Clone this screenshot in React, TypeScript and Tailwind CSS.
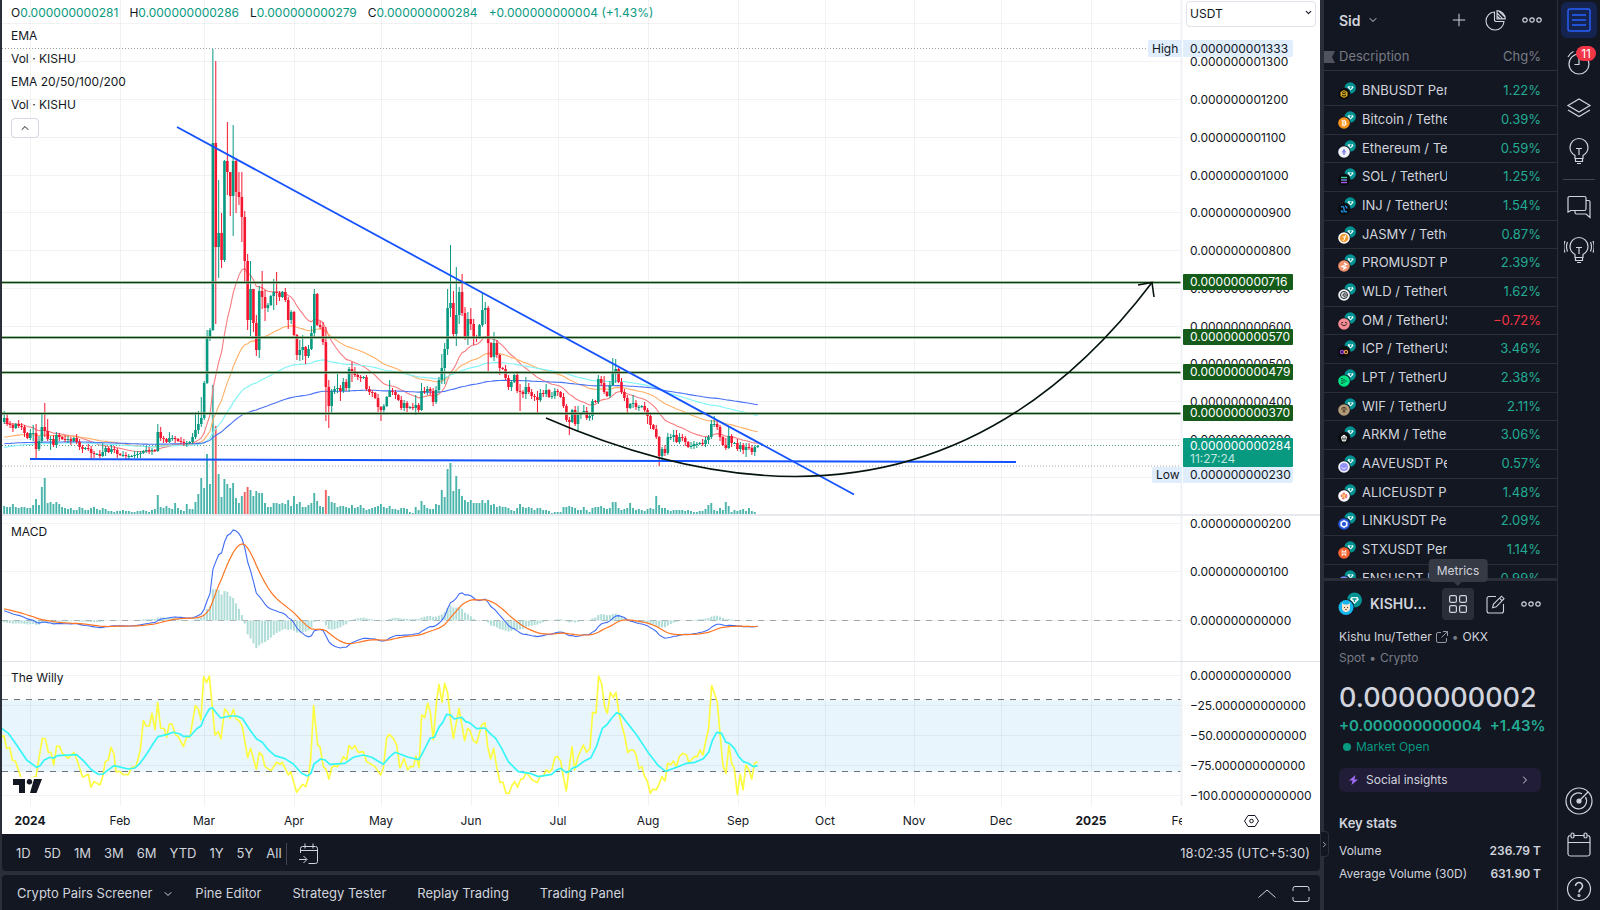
import { ReactNode } from "react";
import { ChevronDown, ChevronRight, ChevronUp, Plus } from "lucide-react";
import { FaBtc, FaEthereum } from "react-icons/fa";

/* ---------- chart data ---------- */

// Every daily series starts nine days before 1 January.
const FIRST_DAY = -9;
const dayX = (day: number) => 30.3 + day * 2.898;

// Daily closes, as heights on the price pane.
const closes = [
  418, 424, 425, 428, 424, 426, 427, 433, 438, 433, 433, 449, 441, 427, 431,
  439, 439, 445, 435, 437, 439, 440, 439, 441, 438, 442, 447, 449, 448, 449,
  453, 454, 454, 456, 452, 448, 452, 449, 450, 454, 455, 455, 456, 456, 456,
  455, 454, 453, 451, 450, 451, 450, 451, 432, 438, 439, 442, 438, 438, 439,
  441, 442, 443, 443, 442, 437, 430, 424, 418, 383, 337, 330, 143, 247, 233,
  260, 161, 172, 196, 161, 192, 197, 217, 261, 320, 289, 323, 350, 291, 297,
  308, 305, 296, 292, 293, 297, 292, 300, 320, 312, 335, 355, 350, 347, 356,
  349, 333, 294, 325, 327, 342, 387, 406, 391, 389, 388, 391, 382, 388, 369,
  371, 375, 377, 378, 377, 389, 392, 393, 398, 407, 410, 406, 397, 391, 392,
  395, 400, 408, 403, 408, 407, 408, 405, 410, 391, 392, 389, 391, 402, 390,
  380, 368, 349, 308, 303, 334, 315, 292, 313, 337, 319, 324, 337, 338, 325,
  310, 308, 343, 357, 343, 355, 368, 369, 378, 387, 382, 375, 391, 392, 394,
  387, 392, 396, 397, 400, 393, 394, 390, 397, 396, 391, 392, 397, 406, 420,
  422, 410, 424, 415, 414, 411, 418, 416, 401, 402, 379, 383, 392, 396, 385,
  372, 369, 382, 392, 398, 408, 404, 403, 407, 407, 406, 410, 416, 425, 429,
  437, 456, 449, 453, 437, 437, 435, 442, 437, 438, 442, 447, 446, 444, 444,
  443, 444, 440, 437, 424, 424, 427, 437, 445, 448, 436, 443, 443, 449, 445,
  450, 447, 448, 452, 447, 446,
];

// Highs and lows of the days whose wicks stand out.
const wicks: Record<number, [number, number]> = {
  [-9]: [411, 424], 1: [425, 441], 2: [424, 458], 3: [436, 451], 4: [413, 443],
  5: [403, 437], 6: [419, 441], 7: [436, 450], 21: [446, 459], 25: [443, 457],
  44: [424, 452], 45: [427, 441], 48: [432, 443], 57: [412, 439],
  58: [411, 434], 59: [397, 427], 60: [381, 420], 61: [330, 384],
  63: [49, 331], 64: [61, 324], 65: [180, 278], 66: [213, 268], 67: [160, 262],
  68: [122, 195], 69: [172, 216], 70: [125, 236], 71: [158, 213],
  72: [172, 205], 73: [172, 242], 74: [211, 283], 75: [254, 330],
  76: [261, 336], 77: [289, 332], 78: [315, 356], 79: [286, 358],
  80: [271, 309], 81: [290, 321], 84: [279, 310], 85: [272, 305],
  89: [297, 329], 92: [334, 360], 93: [340, 361], 94: [335, 360],
  95: [346, 364], 97: [326, 350], 98: [289, 337], 101: [322, 345],
  102: [327, 421], 103: [380, 428], 104: [389, 413], 106: [374, 393],
  107: [385, 401], 111: [362, 382], 116: [375, 391], 120: [394, 412],
  121: [406, 421], 124: [380, 397], 133: [395, 415], 135: [383, 411],
  139: [388, 406], 142: [354, 384], 143: [343, 384], 144: [289, 355],
  145: [245, 317], 146: [291, 337], 147: [267, 346], 148: [287, 324],
  149: [274, 316], 150: [307, 340], 151: [312, 345], 152: [308, 330],
  153: [319, 345], 156: [293, 327], 157: [302, 324], 158: [306, 371],
  160: [332, 361], 162: [354, 375], 169: [384, 411], 171: [377, 399],
  175: [391, 413], 178: [384, 397], 185: [404, 422], 186: [417, 435],
  189: [406, 431], 191: [405, 414], 198: [376, 394], 201: [358, 386],
  202: [359, 383], 206: [395, 414], 208: [395, 408], 213: [408, 424],
  217: [436, 466], 219: [445, 456], 222: [430, 442], 223: [430, 443],
  235: [420, 439], 236: [416, 427], 240: [438, 450], 241: [426, 449],
  247: [443, 457], 249: [445, 455],
};

const volumes = [
  8, 7, 7, 10, 7, 6, 7, 7, 6, 6, 9, 15, 9, 27, 36, 11, 12, 10, 12, 10, 7, 6, 5,
  6, 4, 4, 7, 6, 4, 4, 6, 7, 5, 4, 6, 5, 3, 3, 2, 3, 3, 4, 3, 3, 2, 2, 3, 3, 4,
  3, 2, 4, 5, 19, 7, 6, 8, 6, 5, 11, 6, 4, 3, 10, 5, 5, 12, 20, 36, 26, 60, 30,
  129, 88, 40, 17, 35, 30, 26, 31, 16, 11, 18, 22, 27, 24, 18, 23, 21, 21, 11,
  7, 7, 11, 11, 10, 11, 10, 14, 8, 18, 10, 12, 7, 7, 9, 11, 21, 13, 8, 7, 24,
  18, 12, 11, 7, 8, 8, 7, 6, 9, 6, 7, 9, 6, 4, 5, 6, 7, 8, 10, 7, 6, 8, 5, 5,
  4, 6, 6, 5, 2, 1, 7, 4, 13, 9, 6, 5, 5, 10, 9, 24, 17, 45, 51, 23, 38, 25,
  18, 14, 12, 14, 11, 11, 11, 14, 11, 14, 9, 10, 7, 8, 7, 7, 6, 4, 3, 6, 10, 7,
  6, 7, 6, 4, 6, 6, 4, 4, 3, 1, 2, 2, 2, 7, 7, 8, 7, 6, 4, 4, 7, 4, 2, 6, 7, 7,
  8, 6, 5, 6, 12, 12, 6, 4, 5, 6, 11, 6, 4, 5, 4, 3, 5, 6, 5, 18, 9, 6, 6,
  4, 3, 4, 4, 4, 4, 3, 4, 3, 2, 2, 3, 3, 5, 9, 11, 4, 3, 6, 4, 12, 8, 2, 4,
  3, 4, 5, 3, 6, 3, 2,
];
const redVolume = [64, 74, 75, 102];

// Oscillator traces, sampled three units to the pixel, January-April then May on.
const willyA =
  "5,710 12,707 20,745 29,742 37,780 46,783 62,830 76,850 92,835 108,830 127,715 136,717 145,757 153,757 161,795 170,738 179,740 187,760 205,775 222,757 231,780 248,832 265,823 273,862 282,845 300,855 308,830 316,785 325,780 333,742 342,762 348,815 360,815 368,823 385,824 395,803 408,800 421,750 430,662 439,678 448,678 456,640 465,690 473,607 482,684 493,686 500,712 508,672 516,672 526,703 535,710 550,740 560,713 570,710 586,617 595,628 603,660 611,530 620,548 628,528 645,705 655,695 663,717 674,627 682,635 691,655 700,628 708,656 718,663 727,680 743,773 752,745 769,808 778,757 787,767 795,800 813,812 830,787 840,793 847,787 865,825 872,815 890,877 908,853 917,860 925,835 932,780 941,617 953,735 960,740 970,800 978,808 987,837 995,803 1003,797 1012,800 1021,790 1030,770 1040,780 1047,737 1056,747 1065,737 1075,757 1090,755 1100,785 1125,800 1142,825 1150,805 1160,715 1168,703 1180,715 1190,735 1200,805";
const willyB =
  "0,805 12,775 23,810 30,800 40,800 48,768 57,803 65,645 74,653 83,610 91,637 100,720 109,610 117,553 126,607 134,550 143,580 152,660 160,715 177,625 194,722 203,685 210,692 220,722 230,730 245,675 255,668 263,740 272,777 281,745 290,800 300,847 309,847 318,880 327,880 335,858 344,845 353,862 362,838 370,836 379,817 397,840 412,848 421,828 430,828 439,810 447,817 456,808 465,772 473,770 482,783 490,830 499,873 508,800 516,740 524,810 534,770 550,735 560,757 570,745 578,637 588,640 596,528 605,552 614,620 622,640 631,577 640,592 648,577 657,640 665,675 674,707 683,757 692,750 700,750 708,763 717,806 726,800 733,827 742,843 751,880 759,867 769,870 777,853 786,830 795,843 803,790 812,795 820,783 829,800 838,770 848,760 860,765 866,787 884,770 892,770 900,750 909,765 918,720 926,685 935,557 943,580 952,607 961,710 969,797 978,820 987,735 995,790 1003,805 1012,883 1021,823 1029,870 1038,795 1047,810 1055,837 1064,790 1073,785";
const willyEmaA =
  "5,685 25,700 50,735 80,780 110,802 120,797 133,780 150,772 160,775 172,767 230,764 250,782 275,810 295,823 310,822 325,810 342,797 385,807 405,804 420,790 440,762 457,735 474,710 500,704 520,697 540,702 550,709 570,709 592,685 603,678 612,655 628,627 637,623 650,640 662,654 690,648 710,648 727,655 750,690 770,717 787,727 805,750 825,767 855,776 880,792 905,820 922,828 933,820 942,792 962,777 975,780 990,793 1035,790 1060,772 1090,765 1115,772 1150,793 1170,770 1185,757 1200,762";
const willyEmaB =
  "0,762 25,772 57,779 75,745 90,715 103,712 118,680 128,668 140,643 152,645 163,657 185,652 197,665 208,668 230,686 255,684 270,700 287,715 305,745 325,785 355,815 390,820 415,830 455,823 470,810 482,805 499,818 510,813 517,805 530,800 555,782 573,773 590,738 607,685 620,675 635,655 650,638 662,643 675,660 710,705 745,758 775,797 797,814 830,802 860,790 885,787 910,776 926,757 937,722 950,697 965,700 978,727 988,730 1003,745 1015,768 1030,785 1045,790 1060,800 1073,797";

const months: [string, number][] = [
  ["2024", 30],
  ["Feb", 120],
  ["Mar", 204],
  ["Apr", 294],
  ["May", 381],
  ["Jun", 471],
  ["Jul", 558],
  ["Aug", 648],
  ["Sep", 738],
  ["Oct", 825],
  ["Nov", 914],
  ["Dec", 1001],
  ["2025", 1091],
  ["Feb", 1182],
];

const priceTicks: [string, number][] = [
  ["0.000000001300", 61],
  ["0.000000001200", 99],
  ["0.000000001100", 137],
  ["0.000000001000", 175],
  ["0.000000000900", 212],
  ["0.000000000800", 250],
  ["0.000000000700", 288],
  ["0.000000000600", 326],
  ["0.000000000500", 363],
  ["0.000000000400", 401],
  ["0.000000000300", 439],
  ["0.000000000200", 523],
  ["0.000000000100", 571],
  ["0.000000000000", 620],
  ["0.000000000000", 675],
  ["−25.000000000000", 705],
  ["−50.000000000000", 735],
  ["−75.000000000000", 765],
  ["−100.000000000000", 795],
];

const levels: [string, number][] = [
  ["0.000000000716", 282],
  ["0.000000000570", 337],
  ["0.000000000479", 372],
  ["0.000000000370", 413],
];

function ema(values: number[], length: number, seed: number) {
  const k = 2 / (length + 1);
  let last = seed;
  return values.map((v) => (last = last + k * (v - last)));
}

function line(values: number[]) {
  return values
    .map((v, n) => `${dayX(n + FIRST_DAY).toFixed(1)},${v.toFixed(1)}`)
    .join(" ");
}

const MACD_ZERO = 620.5;
const fast = ema(closes, 12, 421);
const slow = ema(closes, 26, 429);
const macd = fast.map((v, n) => (v - slow[n]) * 1.283);
const signal = ema(macd, 9, -12);

const averages = [
  { stroke: "#f77c80", values: ema(closes, 20, 424) },
  { stroke: "#ffb068", values: ema(closes, 50, 438) },
  { stroke: "#7ff4f7", values: ema(closes, 100, 448) },
  { stroke: "#4a72f5", values: ema(closes, 200, 444) },
];

/* ---------- chart ---------- */

function Plot() {
  return (
    <svg className="h-full min-w-0 flex-1" role="img" aria-label="KISHU / USDT daily chart">
      <rect x="0" y="700" width="100%" height="72" fill="#e9f5fc" />
      {months.map(([, x]) => (
        <line key={x} x1={x - 1.5} x2={x - 1.5} y1="0" y2="806" stroke="#000" strokeOpacity="0.05" />
      ))}
      {[23, 477, ...priceTicks.map(([, y]) => y)].map((y) => (
        <line key={y} x1="0" x2="100%" y1={y + 0.5} y2={y + 0.5} stroke="#000" strokeOpacity="0.05" />
      ))}
      <line x1="0" x2="100%" y1="48.5" y2="48.5" stroke="#9b9ea6" strokeDasharray="1 2" />
      <line x1="0" x2="100%" y1="466" y2="466" stroke="#a6a8ae" strokeDasharray="1 2" />
      <line x1="0" x2="100%" y1="445.5" y2="445.5" stroke="#4f9c8f" strokeDasharray="1 2" />
      <line x1="0" x2="100%" y1="699.5" y2="699.5" stroke="#70737c" strokeDasharray="6 6" />
      <line x1="0" x2="100%" y1="771.5" y2="771.5" stroke="#70737c" strokeDasharray="6 6" />
      <line x1="0" x2="100%" y1="620.5" y2="620.5" stroke="#a3a5ab" strokeDasharray="6 6" />

      <g transform="translate(-2 0)">
        {volumes.map((v, n) => (
          <rect
            key={n}
            x={dayX(n + FIRST_DAY) - 1}
            y={514 - v}
            width="1.9"
            height={v}
            fill={redVolume.includes(n + FIRST_DAY) ? "#f0625f" : "#4bb5ac"}
          />
        ))}
        {averages.map((a) => (
          <polyline key={a.stroke} points={line(a.values)} fill="none" stroke={a.stroke} strokeWidth="1.1" />
        ))}
        {closes.map((close, n) => {
          const open = n === 0 ? 422 : closes[n - 1];
          const day = n + FIRST_DAY;
          const x = dayX(day);
          const top = Math.min(open, close);
          const bottom = Math.max(open, close);
          const [high, low] = wicks[day] ?? [top - 1 - ((n * 7) % 4), bottom + 1 + ((n * 5) % 4)];
          const color = close > open ? "#f5162f" : "#089981";
          return (
            <g key={day} fill={color}>
              <rect x={x - 0.5} y={high} width="1" height={low - high} />
              <rect x={x - 1.3} y={top} width="2.6" height={Math.max(bottom - top, 1)} />
            </g>
          );
        })}
      </g>

      {levels.map(([label, y]) => (
        <g key={label}>
          <line x1="0" x2="100%" y1={y + 0.5} y2={y + 0.5} stroke="#7ea87f" strokeWidth="2.4" />
          <line x1="0" x2="100%" y1={y + 0.5} y2={y + 0.5} stroke="#0d3d12" strokeWidth="1" />
        </g>
      ))}

      <g transform="translate(-2 0)" fill="none">
        <path d="M30 459L1016 462" stroke="#1553ff" strokeWidth="2" />
        <path d="M177 127L854 494.500" stroke="#1553ff" strokeWidth="1.8" />
        <path d="M546 418Q924 583 1152 282.500" stroke="#05140c" strokeWidth="1.6" />
        <path d="M1138 285L1152 282.500L1154 297" stroke="#05140c" strokeWidth="1.6" />

        {macd.map((m, n) => {
          const h = m - signal[n];
          return (
            <rect
              key={n}
              x={dayX(n + FIRST_DAY) - 1}
              y={h < 0 ? MACD_ZERO + h : MACD_ZERO}
              width="2"
              height={Math.abs(h)}
              fill="#b0ddd8"
            />
          );
        })}
        <polyline points={line(macd.map((v) => v + MACD_ZERO))} stroke="#3f6cf6" strokeWidth="1.1" />
        <polyline points={line(signal.map((v) => v + MACD_ZERO))} stroke="#ff7420" strokeWidth="1.2" />

        <g strokeLinejoin="round" strokeWidth="5">
          <g transform="translate(0 500) scale(0.3333)">
            <polyline points={willyA} stroke="#fdfd40" />
            <polyline points={willyEmaA} stroke="#33f6f9" />
          </g>
          <g transform="translate(400 500) scale(0.3333)">
            <polyline points={willyB} stroke="#fdfd40" />
            <polyline points={willyEmaB} stroke="#33f6f9" />
          </g>
        </g>
      </g>

      <g fill="#131722" fontSize="12" textAnchor="middle">
        {months.map(([label, x]) => (
          <text key={x} x={x - 2} y="825" fontWeight={label.startsWith("20") ? 700 : 400}>
            {label}
          </text>
        ))}
      </g>
    </svg>
  );
}

function PriceAxis() {
  return (
    <svg className="h-full w-[138px] shrink-0 overflow-visible" fontSize="12" fill="#131722">
      <line x1="-0.5" x2="-0.5" y1="0" y2="806" stroke="#f0f1f4" strokeWidth="2" />
      {priceTicks.map(([label, y]) => (
        <text key={y} x="8" y={y + 5}>
          {label}
        </text>
      ))}
      <path d="M-32 40H109a2 2 0 0 1 2 2V55a2 2 0 0 1 -2 2H-32a2 2 0 0 1 -2 -2V42a2 2 0 0 1 2 -2z" fill="#e0edfd" />
      <path d="M-28 467H109a2 2 0 0 1 2 2V481a2 2 0 0 1 -2 2H-28a2 2 0 0 1 -2 -2V469a2 2 0 0 1 2 -2z" fill="#e0edfd" />
      <path d="M0.500 40V57M0.500 467V483" stroke="#fff" />
      <text x="-30" y="53">High</text>
      <text x="8" y="53">0.000000001333</text>
      <text x="-26" y="479">Low</text>
      <text x="8" y="479">0.000000000230</text>
      {levels.map(([label, y]) => (
        <g key={label}>
          <rect x="1" y={y - 8} width="110" height="16" rx="1" fill="#155c1b" />
          <text x="8" y={y + 4} fill="#fff">
            {label}
          </text>
        </g>
      ))}
      <rect x="1" y="438" width="110" height="29" rx="1" fill="#089981" />
      <text x="8" y="450" fill="#fff">0.000000000284</text>
      <text x="8" y="463" fill="#bfe6df">11:27:24</text>
      <g fill="none" stroke="#131722">
        <path d="M66 815.500H73L76.500 821L73 826.500H66L62.500 821z" />
        <circle cx="69.500" cy="821" r="1.800" />
      </g>
    </svg>
  );
}

function Legend() {
  const ohlc = [
    ["O", "0.000000000281"],
    ["H", "0.000000000286"],
    ["L", "0.000000000279"],
    ["C", "0.000000000284"],
  ];
  return (
    <div className="absolute top-[3px] left-[9px] flex flex-col items-start gap-1 text-[12px] leading-[19px]">
      <div className="flex gap-[11px] whitespace-nowrap">
        {ohlc.map(([name, value]) => (
          <span key={name}>
            {name}
            <span className="text-[#089981]">{value}</span>
          </span>
        ))}
        <span className="text-[#089981]">+0.000000000004 (+1.43%)</span>
      </div>
      {["EMA", "Vol · KISHU", "EMA 20/50/100/200", "Vol · KISHU"].map((name, n) => (
        <div key={n}>{name}</div>
      ))}
      <button
        aria-label="Collapse legend"
        className="flex h-5 w-7 items-center justify-center rounded-sm border border-[#d6d9e2] bg-white"
      >
        <ChevronUp size={12} />
      </button>
    </div>
  );
}

function Chart() {
  return (
    <div className="relative flex min-h-0 flex-1 overflow-hidden bg-white text-[#131722]">
      <Plot />
      <PriceAxis />
      <div className="absolute inset-x-0 top-[514px] h-[2px] bg-[#e8eaf0]" />
      <div className="absolute inset-x-0 top-[661px] h-px bg-[#e0e3eb]" />
      <Legend />
      <span className="absolute top-[522px] left-[9px] text-[12px] leading-[19px]">MACD</span>
      <span className="absolute top-[668px] left-[9px] text-[12px] leading-[19px]">The Willy</span>
      <svg className="absolute top-[777px] left-2 h-[18px] w-[34px]" viewBox="0 0 34 18" fill="#131722">
        <path
          d="M3 2H15V16H9V8H3zM24 2H32L26.500 16H20zM19.500 2A2.800 2.800 0 1 1 19.400 2z"
          stroke="#fff"
          strokeWidth="4"
          paintOrder="stroke"
        />
      </svg>
      <div className="absolute top-0 right-[4px] w-[130px]">
        <select
          aria-label="Currency"
          className="h-[26px] w-full appearance-none rounded border border-[#e0e3eb] bg-white px-[3px] text-[12px]"
        >
          <option>USDT</option>
        </select>
        <ChevronDown size={9} strokeWidth={3} className="pointer-events-none absolute top-2 right-[3px]" />
      </div>
    </div>
  );
}

/* ---------- bars under the chart ---------- */

function RangeBar() {
  return (
    <div className="flex h-[37px] shrink-0 items-center rounded-b bg-[#131722] pt-[2px] pr-[10px] pl-[14px] text-[13px]">
      <div className="flex gap-[13px]">
        {["1D", "5D", "1M", "3M", "6M", "YTD", "1Y", "5Y", "All"].map((range) => (
          <button key={range}>{range}</button>
        ))}
      </div>
      <span className="mr-3 ml-1 h-[22px] w-px bg-[#434651]" />
      <button aria-label="Go to date">
        <svg width="20" height="22" viewBox="0 0 20 22" fill="none" stroke="currentColor">
          <path d="M1.500 10V5.500a2 2 0 0 1 2 -2H16.500a2 2 0 0 1 2 2V18.500a2 2 0 0 1 -2 2H9.500M1.500 7.500H18.500M6 0.500V5.500M14 0.500V5.500M0 16.500H7.500M4.500 13L8 16.500L4.500 20" />
        </svg>
      </button>
      <button className="ml-auto">18:02:35 (UTC+5:30)</button>
    </div>
  );
}

function PanelBar() {
  return (
    <div className="flex h-[35px] shrink-0 items-center gap-[31px] rounded-t bg-[#131722] pt-[2px] pr-[10px] pl-[15px] text-[13px]">
      <button className="-mr-[10px] flex items-center gap-[10px]">
        Crypto Pairs Screener
        <ChevronDown size={12} />
      </button>
      <button>Pine Editor</button>
      <button>Strategy Tester</button>
      <button>Replay Trading</button>
      <button>Trading Panel</button>
      <div className="ml-auto flex items-center gap-4">
        <button aria-label="Open panel">
          <svg width="18" height="18" viewBox="0 0 18 18" fill="none" stroke="currentColor">
            <path d="M0.500 12.500L9 5L17.500 12.500" />
          </svg>
        </button>
        <button aria-label="Maximize panel">
          <svg width="18" height="18" viewBox="0 0 18 18" fill="none" stroke="currentColor">
            <path d="M1 6V3.500a2 2 0 0 1 2 -2H15a2 2 0 0 1 2 2V6M1 12V14.500a2 2 0 0 0 2 2H15a2 2 0 0 0 2 -2V12" />
          </svg>
        </button>
      </div>
    </div>
  );
}

/* ---------- watchlist ---------- */

type Coin = { name: string; change: string; bg: string; mark: ReactNode };

const coins: Coin[] = [
  {
    name: "BNBUSDT Perpetual",
    change: "1.22%",
    bg: "#0b0c0e",
    mark: (
      <>
        <path d="M6 8L9.500 10V14L6 16L2.500 14V10z" fill="#d9a81c" />
        <path d="M4 10.500L6 11.700L8 10.500M4 13L6 14.200L8 13M6 9V10" stroke="#0b0c0e" fill="none" />
      </>
    ),
  },
  { name: "Bitcoin / TetherUS", change: "0.39%", bg: "#f7931a", mark: <FaBtc x="2.500" y="8.500" size={7} color="#fff" /> },
  { name: "Ethereum / TetherUS", change: "0.59%", bg: "#f2f3fa", mark: <FaEthereum x="2.500" y="8.500" size={7} color="#7d84dc" /> },
  {
    name: "SOL / TetherUS",
    change: "1.25%",
    bg: "#0b0c0e",
    mark: (
      <g strokeWidth="1.4">
        <path d="M3 9.500H9" stroke="#39d6a8" />
        <path d="M3 12H9" stroke="#6d8fe0" />
        <path d="M3 14.500H9" stroke="#a45bf0" />
      </g>
    ),
  },
  {
    name: "INJ / TetherUS",
    change: "1.54%",
    bg: "#0b0c0e",
    mark: <path d="M3 10Q6 8.500 6 12T9 14.500M3 13.500Q4 15 5.500 15M7 9Q9 9.500 9 11.500" stroke="#1d8ce0" strokeWidth="1.500" fill="none" />,
  },
  {
    name: "JASMY / TetherUS",
    change: "0.87%",
    bg: "#fff",
    mark: (
      <>
        <circle cx="6" cy="12" r="4.300" fill="#f29a2e" />
        <path d="M7.500 9L6 14.500L4.500 14M4.500 11H8" stroke="#fff" fill="none" />
      </>
    ),
  },
  { name: "PROMUSDT Perpetual", change: "2.39%", bg: "#f0926e", mark: <path d="M6 9L8.500 10.500L4 12.500L8 13.500L5 15.500" stroke="#fff" strokeWidth="1.300" fill="none" /> },
  {
    name: "WLD / TetherUS",
    change: "1.62%",
    bg: "#eceef1",
    mark: (
      <g stroke="#22252d" fill="none">
        <circle cx="6" cy="12" r="3.500" />
        <path d="M9 12H5.500M7.500 10.500A1.700 1.700 0 1 0 7.500 13.500" />
      </g>
    ),
  },
  {
    name: "OM / TetherUS",
    change: "−0.72%",
    bg: "#f58b93",
    mark: <path d="M3 11.500Q6 16 9 11.500M3.500 10.500H5M7 10.500H8.500" stroke="#30222b" fill="none" />,
  },
  {
    name: "ICP / TetherUS",
    change: "3.46%",
    bg: "#0b0c0e",
    mark: (
      <g fill="none" strokeWidth="1.200">
        <circle cx="4" cy="12" r="1.600" stroke="#a04ae0" />
        <circle cx="8" cy="12" r="1.600" stroke="#ef9a3a" />
      </g>
    ),
  },
  {
    name: "LPT / TetherUS",
    change: "2.38%",
    bg: "#00e287",
    mark: <path d="M4 9V15M6 10.300V13.700M8 11.500V12.500" stroke="#0c3124" strokeWidth="1.300" strokeDasharray="1.300 1" fill="none" />,
  },
  {
    name: "WIF / TetherUS",
    change: "2.11%",
    bg: "#b39a78",
    mark: <path d="M3 11H9M4.500 9.500H7.500M6 12V15M4.500 13H7.500" stroke="#4e3a2a" fill="none" />,
  },
  {
    name: "ARKM / TetherUS",
    change: "3.06%",
    bg: "#0b0c0e",
    mark: <path d="M6 9L8.500 11L7.500 15H4.500L3.500 11zM6 9V15M3.500 11H8.500" stroke="#fff" fill="none" />,
  },
  {
    name: "AAVEUSDT Perpetual",
    change: "0.57%",
    bg: "#f3f2fb",
    mark: (
      <>
        <circle cx="6" cy="12" r="4" fill="#9391f7" />
        <path d="M3.500 12.500Q6 15.500 8.500 12.500" stroke="#fff" fill="none" strokeWidth="0.800" />
      </>
    ),
  },
  {
    name: "ALICEUSDT Perpetual",
    change: "1.48%",
    bg: "#fff",
    mark: <circle cx="6" cy="12" r="2.400" stroke="#f0717f" strokeWidth="2" strokeDasharray="2 1" fill="#f9d05a" />,
  },
  {
    name: "LINKUSDT Perpetual",
    change: "2.09%",
    bg: "#2a5ada",
    mark: <path d="M6 8.800L8.800 10.400V13.600L6 15.200L3.200 13.600V10.400z" stroke="#fff" strokeWidth="1.500" fill="none" />,
  },
  {
    name: "STXUSDT Perpetual",
    change: "1.14%",
    bg: "#fb6331",
    mark: <path d="M3.500 11H8.500M3.500 13H8.500M4 9L5.200 11M8 9L6.800 11M4 15L5.200 13M8 15L6.800 13" stroke="#fff" fill="none" />,
  },
  { name: "ENSUSDT Perpetual", change: "0.99%", bg: "#6f8df6", mark: null },
];

function PairLogo({ bg, mark }: { bg: string; mark: ReactNode }) {
  return (
    <svg className="size-[18px] shrink-0" viewBox="0 0 18 18">
      <circle cx="12.200" cy="6" r="5.700" fill="#009393" />
      <path d="M10.500 4H14.500L15.700 5.500L12.600 8.500L9.500 5.500z" fill="#e9f7f6" />
      <path d="M11.500 5H14M12.600 5V7" stroke="#009393" />
      <circle cx="6" cy="12" r="6.600" fill="#131722" />
      <circle cx="6" cy="12" r="5.800" fill={bg} />
      {mark}
    </svg>
  );
}

function MoreIcon() {
  return (
    <svg width="20" height="8" viewBox="0 0 20 8" fill="none" stroke="currentColor" strokeWidth="1.200">
      <circle cx="3" cy="4" r="2.200" />
      <circle cx="10" cy="4" r="2.200" />
      <circle cx="17" cy="4" r="2.200" />
    </svg>
  );
}

function Watchlist() {
  return (
    <section className="flex min-h-0 flex-1 flex-col overflow-hidden">
      <header className="flex h-[42px] shrink-0 items-center gap-[16px] pr-[15px] pb-[2px] pl-[15px]">
        <button className="mr-auto flex items-center gap-[6px] text-[14px] font-semibold">
          Sid
          <ChevronDown size={12} />
        </button>
        <button aria-label="Add symbol">
          <Plus size={20} strokeWidth={1.2} />
        </button>
        <button aria-label="Advanced view">
          <svg width="21" height="21" viewBox="0 0 21 21" fill="none" stroke="currentColor" strokeWidth="1.100">
            <path d="M9.500 2A9 9 0 1 0 19 11.500H10.500L9.500 10.500z" />
            <path d="M12 0.600V8.900H20.300A8.300 8.300 0 0 0 12 0.600zM12 3L17.800 8.900M12 6L15 8.900M13.500 0.800L20 7" />
          </svg>
        </button>
        <button aria-label="More">
          <MoreIcon />
        </button>
      </header>
      <table className="w-full table-fixed border-collapse text-[13px]">
        <thead>
          <tr className="h-[28px] border-b border-[#2e323e] text-left text-[#787b86]">
            <th className="pt-[2px] font-normal">
              <div className="flex items-center gap-1">
                <svg width="11" height="12" viewBox="0 0 11 12" fill="#50535e">
                  <path d="M0 0H11L8 6L11 12H0z" />
                </svg>
                Description
              </div>
            </th>
            <th className="w-[80px] pt-[2px] pr-4 text-right font-normal">Chg%</th>
          </tr>
        </thead>
        <tbody className="before:block before:h-[6px] before:content-['']">
          {coins.map((coin) => (
            <tr key={coin.name} className="h-[29px] border-b border-[#2a2e39] [&:nth-child(3n)]:h-[28px]">
              <td className="p-0 pl-[14px]">
                <div className="flex items-center gap-[6px]">
                  <PairLogo bg={coin.bg} mark={coin.mark} />
                  <span className="w-[85px] overflow-hidden whitespace-nowrap">{coin.name}</span>
                </div>
              </td>
              <td className={`p-0 pr-4 text-right ${coin.change.startsWith("−") ? "text-[#f23645]" : "text-[#22ab94]"}`}>
                {coin.change}
              </td>
            </tr>
          ))}
        </tbody>
      </table>
    </section>
  );
}

/* ---------- symbol details ---------- */

function Details() {
  return (
    <section className="shrink-0 border-t-[3px] border-[#2a2e39] pt-[7px] pr-4 pb-[26px] pl-[15px] text-[12px] leading-5">
      <div className="flex h-8 items-center">
        <svg className="-ml-px size-6 shrink-0" viewBox="0 0 24 24">
          <circle cx="16.500" cy="8" r="7.500" fill="#009393" />
          <path d="M13.500 5H19.500L21 7.500L16.500 12L12 7.500z" fill="#e9f7f6" />
          <path d="M14.500 7H18.500M16.500 7V10" stroke="#009393" strokeWidth="1.300" />
          <circle cx="8" cy="15.500" r="8.400" fill="#131722" />
          <circle cx="8" cy="15.500" r="7.500" fill="#17b6f0" />
          <path d="M4 11L6 12.500H10L12 11V17Q11 20 8 20T4 17z" fill="#f7e3cb" />
          <path d="M6.500 15V16M9.500 15V16M7.300 17.500H8.700" stroke="#5b3a2c" />
        </svg>
        <h2 className="ml-2 w-16 text-[14px] font-semibold whitespace-nowrap">KISHU...</h2>
        <div className="relative ml-2">
          <button
            aria-label="Metrics"
            className="flex size-8 items-center justify-center rounded bg-[#2a2e39]"
          >
            <svg width="18" height="18" viewBox="0 0 18 18" fill="none" stroke="currentColor" strokeWidth="1.200">
              <rect x="0.600" y="0.600" width="6.800" height="6.800" rx="1.500" />
              <rect x="10.600" y="0.600" width="6.800" height="6.800" rx="1.500" />
              <rect x="0.600" y="10.600" width="6.800" height="6.800" rx="1.500" />
              <rect x="10.600" y="10.600" width="6.800" height="6.800" rx="1.500" />
            </svg>
          </button>
          <span
            role="tooltip"
            className="absolute bottom-full left-1/2 mb-[6px] -translate-x-1/2 rounded-sm bg-[#363a45] px-2 py-[2px] text-[12px] leading-[19px] after:absolute after:top-full after:left-1/2 after:-translate-x-1/2 after:border-4 after:border-transparent after:border-t-[#363a45] after:content-['']"
          >
            Metrics
          </span>
        </div>
        <button aria-label="Edit note" className="ml-3">
          <svg width="19" height="19" viewBox="0 0 19 19" fill="none" stroke="currentColor" strokeWidth="1.100">
            <path d="M10 1.500H3a2 2 0 0 0 -2 2V16a2 2 0 0 0 2 2H15.500a2 2 0 0 0 2 -2V9M6.500 12.800L7.500 9L15.500 1.200L18 3.700L10.200 11.800zM13.500 3.200L16 5.700" />
          </svg>
        </button>
        <button aria-label="More" className="ml-auto">
          <MoreIcon />
        </button>
      </div>
      <p className="mt-[7px] flex items-center gap-1">
        Kishu Inu/Tether
        <svg width="12" height="12" viewBox="0 0 12 12" fill="none" stroke="#9598a1">
          <path d="M5 1.500H2a1.500 1.500 0 0 0 -1.500 1.500V10a1.500 1.500 0 0 0 1.500 1.500H9a1.500 1.500 0 0 0 1.500 -1.500V7M7 0.500H11.500V5M11.500 0.500L5.500 6.500" />
        </svg>
        <span className="text-[#787b86]">•</span>
        OKX
      </p>
      <p className="mt-px flex gap-1 text-[#787b86]">
        <span>Spot</span>
        <span>•</span>
        <span>Crypto</span>
      </p>
      <p className="mt-3 text-[27px] leading-9 font-medium whitespace-nowrap">0.0000000002</p>
      <p className="flex gap-2 text-[15px] font-semibold whitespace-nowrap text-[#22ab94]">
        <span>+0.000000000004</span>
        <span>+1.43%</span>
      </p>
      <p className="mt-px flex items-center gap-[5px] pl-1 text-[12px] text-[#089981]">
        <span className="size-2 rounded-full bg-[#089981]" />
        Market Open
      </p>
      <button className="mt-[11px] flex h-6 w-full items-center rounded-md bg-[#211c38] pr-[10px] pl-[10px]">
        <svg width="9" height="10" viewBox="0 0 9 10" fill="#9d6cf5">
          <path d="M6.500 0L0 5.500H3.500L2.500 10L9 4.500H5.500z" />
        </svg>
        <span className="ml-2">Social insights</span>
        <ChevronRight size={12} className="ml-auto" />
      </button>
      <h3 className="mt-[21px] mb-2 text-[13px] font-semibold">Key stats</h3>
      <dl className="flex flex-col gap-[3px]">
        <div className="flex justify-between">
          <dt>Volume</dt>
          <dd className="font-semibold">236.79 T</dd>
        </div>
        <div className="flex justify-between">
          <dt>Average Volume (30D)</dt>
          <dd className="font-semibold">631.90 T</dd>
        </div>
      </dl>
    </section>
  );
}

/* ---------- icon rail ---------- */

function RailButton({ label, active = false, children }: { label: string; active?: boolean; children: ReactNode }) {
  return (
    <button
      aria-label={label}
      className={`relative flex size-9 items-center justify-center rounded-md ${active ? "bg-[#142350] text-[#2962ff]" : ""}`}
    >
      <svg width="30" height="30" viewBox="0 0 30 30" fill="none" stroke="currentColor" strokeWidth="1.200">
        {children}
      </svg>
    </button>
  );
}

const bulb = (
  <path d="M11 18.500Q6 15.500 6 10.500A9 9 0 0 1 24 10.500Q24 15.500 19 18.500V21.500H11zM11.500 21.500V24.500H18.500V21.500M13 26.500H17M12 11.500H18M15 11.500V18" />
);

function Rail() {
  return (
    <nav className="flex w-[43px] shrink-0 flex-col items-center gap-2 border-l border-[#2a2e39] bg-[#131722] pt-[2px] pb-[3px]">
      <RailButton label="Watchlist" active>
        <rect x="4" y="4" width="22" height="22" rx="2" strokeWidth="1.400" />
        <path d="M8 10H22M8 15H22M8 20H22" strokeWidth="1.400" />
      </RailButton>
      <div className="relative">
        <RailButton label="Alerts">
          <circle cx="15" cy="15" r="10" />
          <path d="M15 9V15.500H10.500M4 8Q6 4 9.500 2.500" />
        </RailButton>
        <span className="absolute top-0 right-px rounded-full bg-[#f23645] px-[5px] text-[12px] leading-[15px] text-white">
          11
        </span>
      </div>
      <RailButton label="Object tree">
        <path d="M4 12.500L15 6L26 12.500L15 19zM4 17L15 23.500L26 17" />
      </RailButton>
      <RailButton label="Ideas">{bulb}</RailButton>
      <span className="my-px h-px w-8 bg-[#434651]" />
      <RailButton label="Chats">
        <path d="M4 20V6a1.500 1.500 0 0 1 1.500 -1.500H20.500a1.500 1.500 0 0 1 1.500 1.500V17a1.500 1.500 0 0 1 -1.500 1.500H7zM11 18.500V20.500a1.500 1.500 0 0 0 1.500 1.500H22L26 25.500V10a1.500 1.500 0 0 0 -1.500 -1.500H22" />
      </RailButton>
      <RailButton label="Streams">
        {bulb}
        <path d="M3.500 6Q1.500 10.500 3.500 15.500M1 5Q-1.500 10.500 1 16.500M26.500 6Q28.500 10.500 26.500 15.500M29 5Q31.500 10.500 29 16.500" />
      </RailButton>
      <div className="mt-auto" />
      <RailButton label="Goals">
        <circle cx="15" cy="15" r="13" />
        <path d="M21.500 11A8 8 0 1 1 18 7.700M15 15L24 6" />
        <circle cx="15" cy="15" r="2" fill="currentColor" />
      </RailButton>
      <RailButton label="Calendar">
        <path d="M4 12.500H26M9.500 5.500H20.500M6.500 5.500a2.500 2.500 0 0 0 -2.500 2V24a2.500 2.500 0 0 0 2.500 2H23.500a2.500 2.500 0 0 0 2.500 -2V7.500a2.500 2.500 0 0 0 -2.500 -2" />
        <rect x="7" y="3" width="3" height="5" rx="1.500" />
        <rect x="20" y="3" width="3" height="5" rx="1.500" />
      </RailButton>
      <RailButton label="Help">
        <circle cx="15" cy="15" r="11.500" />
        <path d="M11.500 12A3.500 3.500 0 1 1 17.500 14.500Q15 16 15 18.500" strokeWidth="1.600" />
        <circle cx="15" cy="21.500" r="1" />
      </RailButton>
    </nav>
  );
}

export default function App() {
  return (
    <div className="flex h-screen overflow-hidden bg-[#2a2e39] pl-[2px] font-['Inter','Liberation_Sans',sans-serif] text-[#d1d4dc]">
      <main className="flex min-w-0 flex-1 flex-col">
        <Chart />
        <RangeBar />
        <div className="h-1 shrink-0" />
        <PanelBar />
      </main>
      <aside className="relative ml-1 flex w-[233px] shrink-0 flex-col bg-[#131722]">
        <Watchlist />
        <Details />
        <button
          aria-label="Hide panel"
          className="absolute bottom-[53px] -left-[3px] flex h-[26px] w-2 items-center justify-center rounded-r border border-l-0 border-[#2a2e39] bg-[#131722]"
        >
          <ChevronRight size={9} className="shrink-0" />
        </button>
      </aside>
      <Rail />
    </div>
  );
}
